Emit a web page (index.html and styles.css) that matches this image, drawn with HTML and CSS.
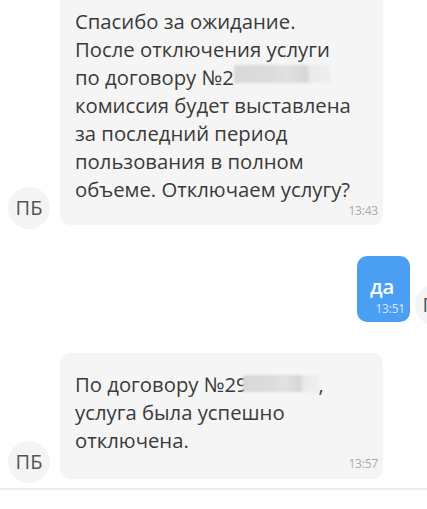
FILE: index.html
```html
<!DOCTYPE html>
<html lang="ru">
<head>
<meta charset="utf-8">
<title>Чат</title>
<link rel="stylesheet" href="styles.css">
</head>
<body>
<div class="chat">
  <div class="msg in">
    <div class="avatar">ПБ</div>
    <div class="bubble">
      <p class="text">Спасибо за ожидание.<br>После отключения услуги<br>по договору №2<span class="redact redact-a"></span><br>комиссия будет выставлена<br>за последний период<br>пользования в полном<br>объеме. Отключаем услугу?</p>
      <div class="time">13:43</div>
    </div>
  </div>
  <div class="msg out">
    <div class="bubble bubble-out">
      <p class="text">да</p>
      <div class="time">13:51</div>
    </div>
    <div class="avatar">ПБ</div>
  </div>
  <div class="msg in">
    <div class="avatar">ПБ</div>
    <div class="bubble bubble-short">
      <p class="text">По договору №29<span class="redact redact-b"></span>,<br>услуга была успешно<br>отключена.</p>
      <div class="time">13:57</div>
    </div>
  </div>
</div>
<div class="divider"></div>
</body>
</html>
```

FILE: styles.css
```css
html, body {
  margin: 0;
  padding: 0;
  background: #ffffff;
  overflow: hidden;
}

body {
  font-family: "Open Sans", "Noto Sans", sans-serif;
  color: #3a3a3a;
  width: 427px;
  height: 509px;
}

.chat {
  width: 465px;
  margin-top: -10px;
  display: flex;
  flex-direction: column;
  gap: 31px;
}

.msg {
  display: flex;
  align-items: flex-end;
}

.msg.in {
  padding-left: 8px;
  gap: 10px;
}

.msg.out {
  justify-content: flex-end;
  padding-right: 8px;
  gap: 5px;
}

.avatar {
  flex: none;
  width: 42px;
  height: 42px;
  border-radius: 50%;
  background: #f4f4f4;
  color: #555555;
  font-size: 20px;
  line-height: 42px;
  text-align: center;
  margin-bottom: -4px;
}

.bubble {
  box-sizing: border-box;
  width: 323px;
  background: #f5f5f5;
  border-radius: 10px;
  padding: 17px 5px 7px 15px;
}

.text {
  margin: 0;
  font-size: 20.3px;
  line-height: 28px;
}

.time {
  text-align: right;
  font-size: 12px;
  line-height: 14px;
  color: #aaaaaa;
  margin-top: 1px;
  letter-spacing: -0.2px;
}

.bubble-short .time {
  margin-top: 3px;
}

.bubble-short {
  padding-bottom: 8px;
}

.bubble-out {
  width: 53px;
  background: #4b9ff3;
  padding: 16px 5px 6px 13px;
}

.bubble-out .text {
  color: #ffffff;
  font-weight: 600;
}

.bubble-out .time {
  color: #d4e7fc;
  margin-top: 2px;
}

.redact {
  display: inline-block;
  background: linear-gradient(90deg, #d9d9d9 0%, #dcdcdc 40%, #e2e2e2 55%, #d6d6d6 75%, #ebebeb 80%, #eeeeee 100%);
  filter: blur(1px);
}

.redact-a {
  width: 96px;
  height: 18px;
  vertical-align: 2px;
}

.redact-b {
  width: 76px;
  height: 17px;
  margin-left: -5px;
  vertical-align: 0;
}

.divider {
  margin-top: 9px;
  height: 2px;
  background: #ededed;
}
```
